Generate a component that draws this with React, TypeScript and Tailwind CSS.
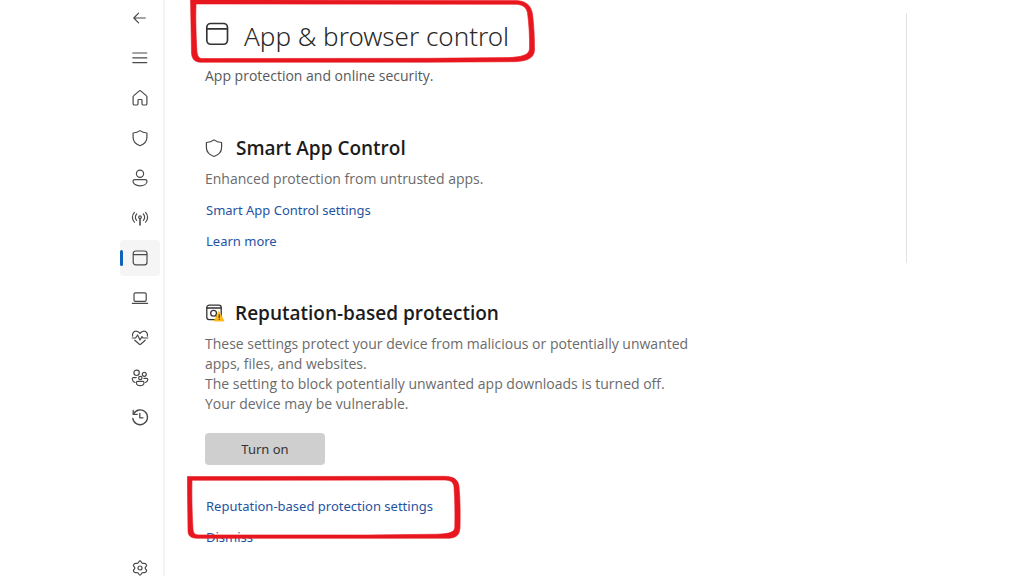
import type { ReactNode } from 'react';
import clsx from 'clsx';

interface IconProps {
  className?: string;
  strokeWidth?: number;
  children?: ReactNode;
}

function Icon({ className = 'size-5', strokeWidth = 1.2, children }: IconProps) {
  return (
    <svg
      viewBox="0 0 20 20"
      className={className}
      fill="none"
      stroke="currentColor"
      strokeWidth={strokeWidth}
      strokeLinecap="round"
      strokeLinejoin="round"
      aria-hidden="true"
    >
      {children}
    </svg>
  );
}

const BackIcon = () => (
  <Icon>
    <path d="M15.3 10 H4.2 M8.6 5.2 L3.8 10 L8.6 14.8" />
  </Icon>
);

const MenuIcon = () => (
  <Icon>
    <path d="M2.8 5 H16.8 M2.8 9.8 H16.8 M2.8 14.6 H16.8" />
  </Icon>
);

const HomeIcon = () => (
  <Icon>
    <path d="M9 3.1 C9.6 2.6 10.4 2.6 11 3.1 L16.2 7.6 C16.7 8 16.9 8.5 16.9 9.1 V15.7 C16.9 16.5 16.4 17 15.6 17 H13.3 C12.5 17 12 16.5 12 15.7 V12.2 C12 11.8 11.7 11.5 11.3 11.5 H8.7 C8.3 11.5 8 11.8 8 12.2 V15.7 C8 16.5 7.5 17 6.7 17 H4.4 C3.6 17 3.1 16.5 3.1 15.7 V9.1 C3.1 8.5 3.3 8 3.8 7.6 Z" />
  </Icon>
);

const ShieldIcon = ({ className, strokeWidth }: IconProps) => (
  <Icon className={className} strokeWidth={strokeWidth}>
    <path d="M10 2.6 C12 4.2 14.4 4.9 16.9 5 V9.6 C16.9 13.6 14.3 16.2 10 17.7 C5.7 16.2 3.1 13.6 3.1 9.6 V5 C5.6 4.9 8 4.2 10 2.6 Z" />
  </Icon>
);

const AccountIcon = () => (
  <Icon>
    <circle cx="10" cy="5.8" r="3.6" />
    <path d="M4.7 11.6 H15.3 C16.3 11.6 17 12.3 17 13.2 C17 16 14 17.8 10 17.8 C6 17.8 3 16 3 13.2 C3 12.3 3.7 11.6 4.7 11.6 Z" />
  </Icon>
);

const NetworkIcon = () => (
  <Icon>
    <circle cx="10" cy="9.2" r="1.3" />
    <path d="M10 10.8 V17" strokeWidth="1.6" />
    <path d="M6.7 12.4 A4.5 4.5 0 0 1 6.7 6 M13.3 12.4 A4.5 4.5 0 0 0 13.3 6" />
    <path d="M4.4 14.2 A7 7 0 0 1 4.4 4.4 M15.6 14.2 A7 7 0 0 0 15.6 4.4" />
  </Icon>
);

const WindowIcon = ({ className, strokeWidth }: IconProps) => (
  <Icon className={className} strokeWidth={strokeWidth}>
    <rect x="3.2" y="3" width="13.8" height="13.8" rx="2.6" />
    <path d="M3.4 6.6 H16.8" />
  </Icon>
);

const LaptopIcon = () => (
  <Icon>
    <rect x="4" y="4.8" width="12.2" height="8.6" rx="1.4" />
    <path d="M2.4 15.4 H17.6" />
  </Icon>
);

const HeartIcon = () => (
  <Icon>
    <path d="M2.6 8.2 C2 5.4 3.6 3.1 6 3.1 C7.8 3.1 9 4 10 5.4 C11 4 12.2 3.1 14 3.1 C16.4 3.1 18 5.4 17.4 8.2" />
    <path d="M2.2 10 H5.6 L7.6 7 L10 12 L12 8.6 L13 10 H17.8" />
    <path d="M4.8 12.2 L9.3 16.2 C9.7 16.6 10.3 16.6 10.7 16.2 L15.2 12.2" />
  </Icon>
);

const FamilyIcon = () => (
  <Icon>
    <circle cx="6.6" cy="4.8" r="2.7" />
    <circle cx="14.3" cy="6.3" r="2" />
    <circle cx="10.3" cy="10" r="1.7" />
    <path d="M6.2 9.6 H3.4 C2.6 9.6 2.2 10.2 2.3 11 C2.5 13 3.4 14 5 14.5 M14 10.4 H16.7 C17.5 10.4 17.9 11 17.7 11.8 C17.4 13.3 16.7 14.1 15.5 14.5" />
    <path d="M7.4 13.4 H13 C13.6 13.4 14 13.8 14 14.4 C14 16.4 12.4 17.6 10.2 17.6 C8 17.6 6.4 16.4 6.4 14.4 C6.4 13.8 6.8 13.4 7.4 13.4 Z" />
  </Icon>
);

const HistoryIcon = () => (
  <Icon strokeWidth={1.3}>
    <path d="M3.2 2.4 V6.4 H7.2" />
    <path d="M3.5 6 A7.4 7.4 0 1 1 2.8 10.4" />
    <path d="M9.8 5.4 V9.8 H13" />
  </Icon>
);

const SettingsIcon = () => (
  <Icon>
    <circle cx="10" cy="10" r="2" />
    <path d="M10 2.8 C11 2.8 11.3 4.6 12.3 5.2 C13.4 5.8 15 5 15.7 5.8 C16.7 7 16.9 7.9 15.8 8.7 C15 9.4 15 10.6 15.8 11.3 C16.9 12.1 16.7 13 15.7 14.2 C15 15 13.4 14.2 12.3 14.8 C11.3 15.4 11 17.2 10 17.2 C9 17.2 8.7 15.4 7.7 14.8 C6.6 14.2 5 15 4.3 14.2 C3.3 13 3.1 12.1 4.2 11.3 C5 10.6 5 9.4 4.2 8.7 C3.1 7.9 3.3 7 4.3 5.8 C5 5 6.6 5.8 7.7 5.2 C8.7 4.6 9 2.8 10 2.8 Z" />
  </Icon>
);

const ReputationIcon = () => (
  <Icon className="size-5 shrink-0" strokeWidth={1.3}>
    <rect x="1.8" y="2.2" width="14.4" height="14.4" rx="2.4" />
    <path d="M2 5 H16" />
    <circle cx="8.6" cy="10.2" r="2.9" />
    <path d="M10.7 12.3 L12.4 14" />
    <path d="M14 8.6 L19 18 H9.4 Z" fill="#fdb913" stroke="#fdb913" strokeWidth="0.8" />
    <path d="M14.2 11.8 V14.6 M14.2 16.4 V16.5" stroke="#4a3a10" strokeWidth="1.2" />
  </Icon>
);

const navItems = [
  { label: 'Back', icon: <BackIcon /> },
  { label: 'Open navigation', icon: <MenuIcon /> },
  { label: 'Home', icon: <HomeIcon /> },
  { label: 'Virus & threat protection', icon: <ShieldIcon /> },
  { label: 'Account protection', icon: <AccountIcon /> },
  { label: 'Firewall & network protection', icon: <NetworkIcon /> },
  { label: 'App & browser control', icon: <WindowIcon />, active: true },
  { label: 'Device security', icon: <LaptopIcon /> },
  { label: 'Device performance & health', icon: <HeartIcon /> },
  { label: 'Family options', icon: <FamilyIcon /> },
  { label: 'Protection history', icon: <HistoryIcon /> },
];

function Sidebar() {
  return (
    <nav className="flex shrink-0 flex-col gap-1 border-r-2 border-[#f4f4f4] pr-[3px] pl-0.5 text-[#4a4a4a]">
      {navItems.map((item) => (
        <button
          key={item.label}
          aria-label={item.label}
          className={clsx(
            'relative flex h-9 w-10 shrink-0 items-center justify-center rounded',
            item.active && 'bg-[#f5f5f5]'
          )}
        >
          {item.active && <span className="absolute left-0 h-4 w-[3px] rounded-full bg-[#0f63b8]" />}
          {item.icon}
        </button>
      ))}
      <button aria-label="Settings" className="mt-auto flex h-4 w-10 shrink-0 items-center justify-center">
        <SettingsIcon />
      </button>
    </nav>
  );
}

// Hand-drawn red markers around the highlighted parts
function TitleMarker() {
  return (
    <svg
      viewBox="0 0 346 64"
      className="pointer-events-none absolute -top-4 -left-[15px] h-16 w-[346px] max-w-none"
      aria-hidden="true"
    >
      <path
        fill="#e8171f"
        stroke="#e8171f"
        strokeWidth="0.6"
        fillRule="evenodd"
        d="M0.5 0 L326 0.4 C336 1 341 5 342.5 14 C344 26 344.5 38 344.5 50 C344 58 338 61 325 61.7 L238 62.2 H10 C4 62 1.5 58 1.5 52 Z M6 4 C5.5 20 6 36 7 52 C8 57 9 58.5 13 58.5 L238 58.3 L318 57.6 C332 57 339 55 339.5 49 C339.8 37 339 24 337.5 13 C336.5 7.5 333 4.6 326 4.3 Z"
      />
    </svg>
  );
}

function LinkMarker() {
  return (
    <svg
      viewBox="0 0 274 64"
      className="pointer-events-none absolute -top-[21px] -left-[18px] h-16 w-[274px] max-w-none"
      aria-hidden="true"
    >
      <path
        fill="#e8171f"
        stroke="#e8171f"
        strokeWidth="0.6"
        fillRule="evenodd"
        d="M0.3 1.6 L258 1.3 C266 1.6 271 4 272 11 C273.3 25 273.3 39 273 53 C272.5 60 269 63 262 63.2 L180 63.3 H10 C4 63 1 61 1 56 Z M5 5.3 C4.7 22 5 38 6 54 C6.4 58.5 8 60 12 59.9 L180 60 L250 59.2 C263 58.8 267.7 57 267.8 52 C268 38 268 25 267 12 C266.5 7 263.5 5.2 258 5 Z"
      />
    </svg>
  );
}

function TextLink({ children }: { children: ReactNode }) {
  return (
    <a href="#" className="ml-px block w-fit font-['Noto_Sans',sans-serif] text-[13px] leading-5 text-[#1f54a3]">
      {children}
    </a>
  );
}

export default function App() {
  return (
    <div className="flex h-screen overflow-hidden bg-white pr-[117px] pl-[118px] font-['Open_Sans','Noto_Sans',sans-serif] text-sm leading-5 text-[#6b6b6b]">
      <Sidebar />

      <main className="min-w-0 flex-1 pt-4 pl-10">
        <header>
          <div className="relative flex h-10 items-center gap-3">
            <WindowIcon className="-ml-[3px] mb-1 size-[30px] shrink-0 text-[#333]" strokeWidth={1.1} />
            <h1 className="font-['Noto_Sans',sans-serif] text-[26px] leading-10 font-light whitespace-nowrap text-[#2a2a2a]">
              App &amp; browser control
            </h1>
            <TitleMarker />
          </div>
          <p className="mt-[10px] text-[#595959]">App protection and online security.</p>
        </header>

        <section className="mt-12">
          <div className="flex h-7 items-center gap-[11px]">
            <ShieldIcon className="-ml-0.5 size-[22px] shrink-0 text-[#444]" strokeWidth={1.1} />
            <h2 className="text-[19px] leading-7 font-semibold text-[#1c1c1c]">Smart App Control</h2>
          </div>
          <p className="mt-[7px]">Enhanced protection from untrusted apps.</p>
          <div className="mt-[11px] flex flex-col gap-[11px]">
            <TextLink>Smart App Control settings</TextLink>
            <TextLink>Learn more</TextLink>
          </div>
        </section>

        <section className="mt-12">
          <div className="flex h-7 items-center gap-[10px] text-[#333]">
            <ReputationIcon />
            <h2 className="text-[19px] leading-7 font-semibold text-[#1c1c1c]">Reputation-based protection</h2>
          </div>
          <p className="mt-[7px] max-w-[500px]">
            These settings protect your device from malicious or potentially unwanted apps, files, and websites.
            <br />
            The setting to block potentially unwanted app downloads is turned off.
            <br />
            Your device may be vulnerable.
          </p>
          <button className="mt-[19px] block h-8 w-[120px] rounded bg-[#cfcfcf] font-['Noto_Sans',sans-serif] text-[13px] text-[#333]">
            Turn on
          </button>
          <div className="mt-[31px] flex flex-col gap-[11px]">
            <div className="relative">
              <TextLink>Reputation-based protection settings</TextLink>
              <LinkMarker />
            </div>
            <TextLink>Dismiss</TextLink>
          </div>
        </section>
      </main>

      <div className="mt-[13px] h-[250px] w-px shrink-0 bg-[#e2e2e2]" />
    </div>
  );
}
